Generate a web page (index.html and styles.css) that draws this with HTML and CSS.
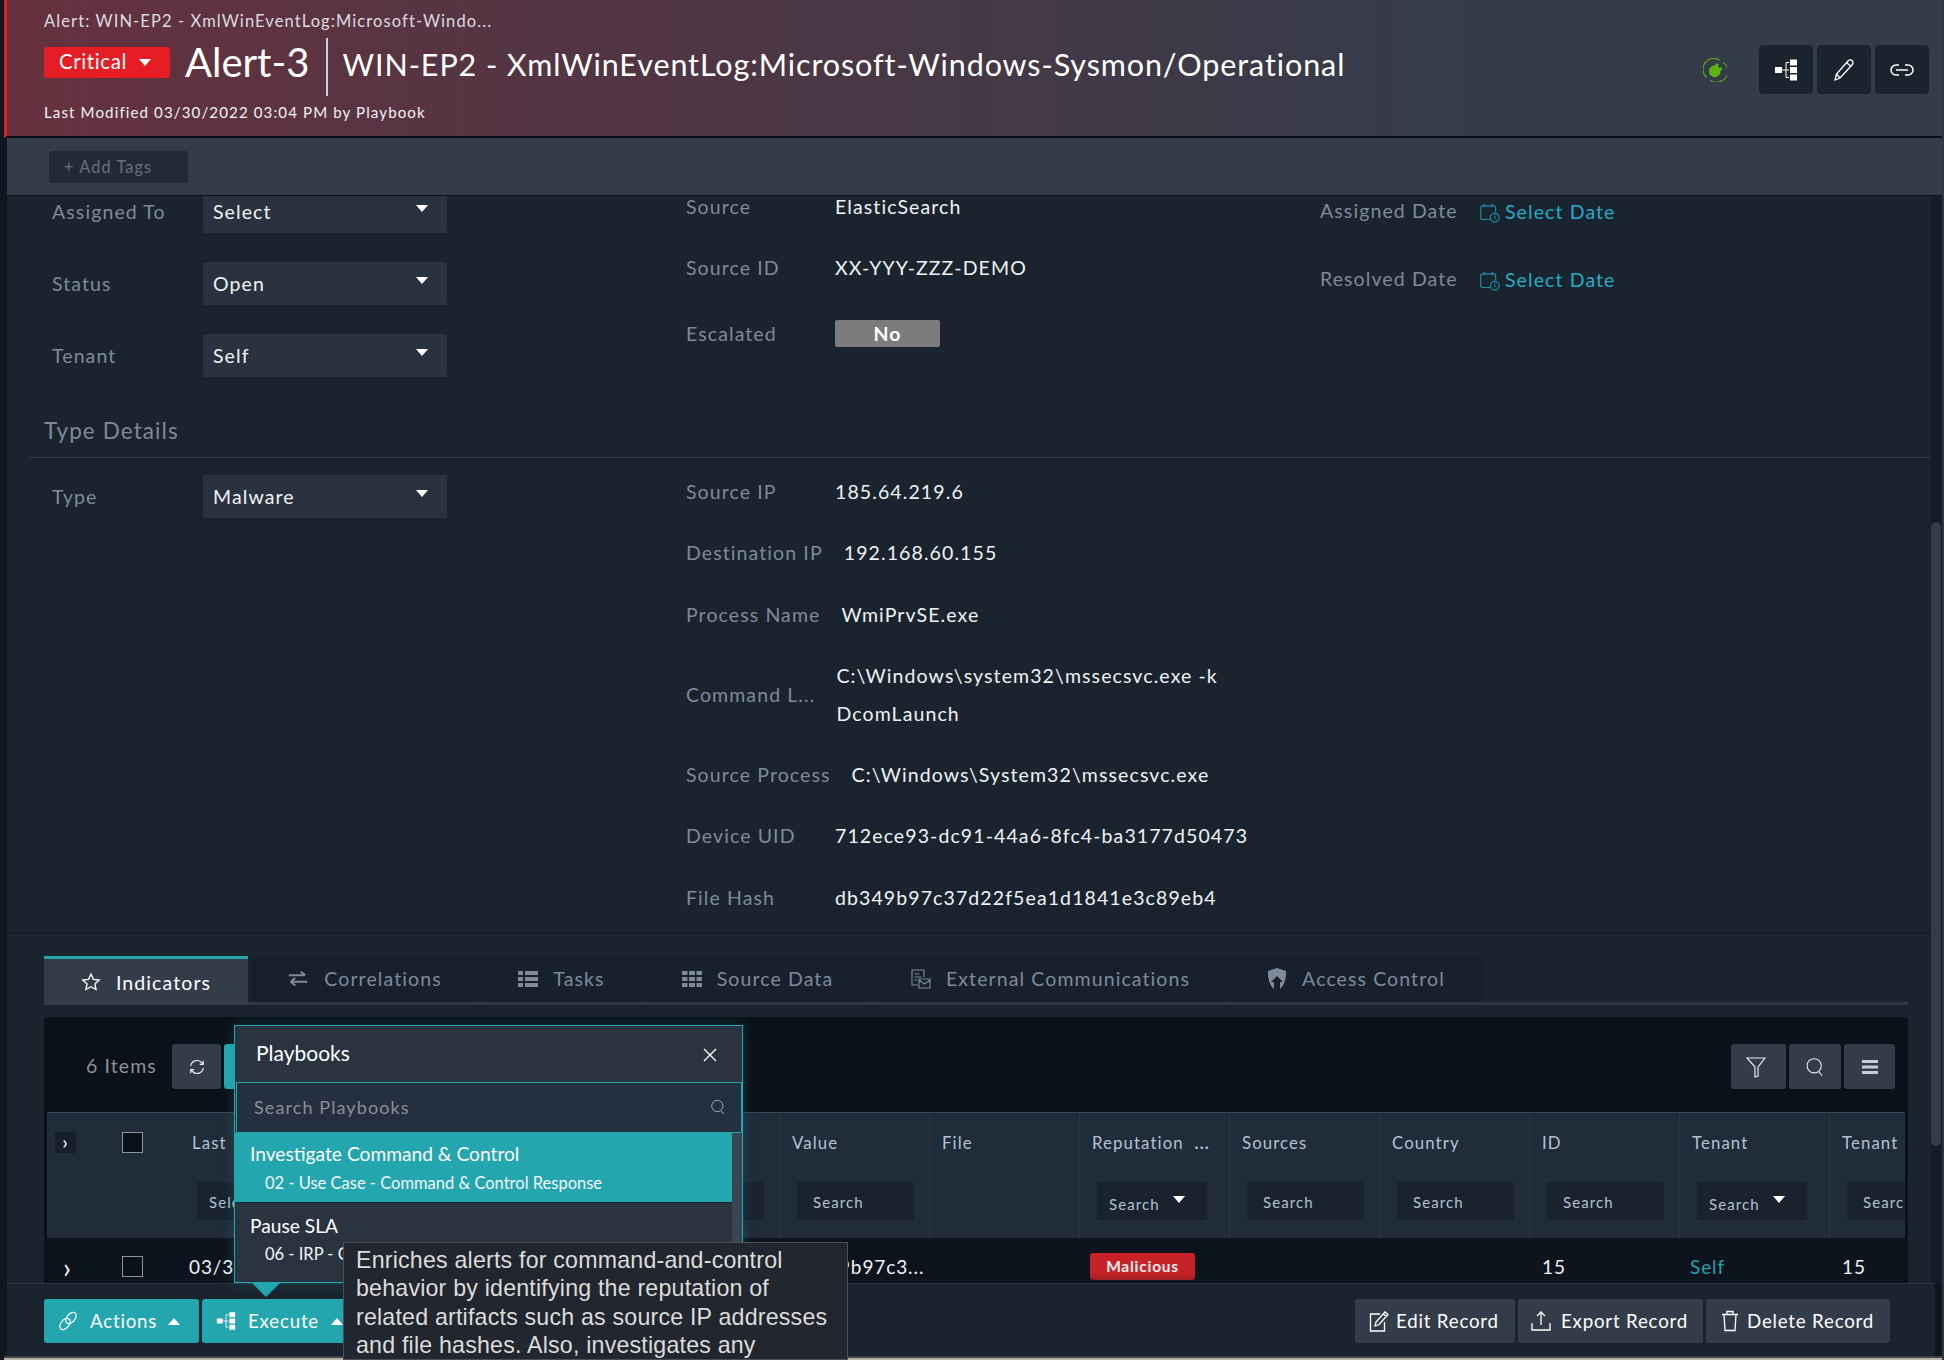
FILE: index.html
```html
<!DOCTYPE html>
<html lang="en">
<head>
  <meta charset="UTF-8">
  <title>Alert-3</title>
  <link rel="stylesheet" href="styles.css">
</head>
<body>
  <svg class="icon-defs" width="0" height="0">
    <symbol id="i-flow" viewBox="0 0 24 24">
      <path d="M8 12h4M12 4.500v15M12 4.500h3M12 12h3M12 19.500h3" fill="none" stroke="currentColor" stroke-width="1"/>
      <path d="M1 9h7v6H1zM16 1.500h7v6h-7zM16 9h7v6h-7zM16 16.500h7v6h-7z" fill="currentColor"/>
    </symbol>
    <symbol id="i-cal" viewBox="0 0 24 24">
      <path d="M13 20H4a2 2 0 0 1-2-2V6.500a2 2 0 0 1 2-2h13a2 2 0 0 1 2 2V12M6 2v4M15 2v4" fill="none" stroke="currentColor" stroke-width="1.300"/>
      <circle cx="18" cy="18" r="5" fill="none" stroke="currentColor" stroke-width="1.300"/>
      <path d="M18 15v3l2 2" fill="none" stroke="currentColor" stroke-width="1.100"/>
    </symbol>
    <symbol id="i-search" viewBox="0 0 24 24">
      <circle cx="11" cy="10.500" r="8.500" fill="none" stroke="currentColor" stroke-width="1.300"/>
      <path d="M16.500 17.500l4 5" fill="none" stroke="currentColor" stroke-width="1.300"/>
    </symbol>
  </svg>

  <div class="page">
    <!-- Record header -->
    <header class="record-head">
      <div class="head-left">
        <div class="crumb">Alert: WIN-EP2 - XmlWinEventLog:Microsoft-Windo...</div>
        <div class="head-title">
          <span class="severity">Critical<i class="caret"></i></span>
          <h1 class="alert-id">Alert-3</h1>
          <h2 class="alert-name">WIN-EP2 - XmlWinEventLog:Microsoft-Windows-Sysmon/Operational</h2>
        </div>
        <div class="modified">Last Modified 03/30/2022 03:04 PM by Playbook</div>
      </div>
      <div class="head-right">
        <svg class="plug" viewBox="0 0 24 24" width="24" height="24">
          <path d="M3.500 19.500A11 11 0 0 1 17 2.200M20.500 4.500A11 11 0 0 1 7 22" fill="none" stroke="#5aa50f" stroke-width="1.200"/>
          <path d="M6 13.500c0-3.500 2.500-6 5.500-6L14 5l2 2-1 1.500 1.500 1.500L18 9l1.500 2-2 2c0 3.500-2.500 6-5.500 6s-6-2-6-5.500z" fill="#5fb30e"/>
        </svg>
        <button class="head-btn"><svg width="24" height="24"><use href="#i-flow"/></svg></button>
        <button class="head-btn">
          <svg width="22" height="24" viewBox="0 0 22 24"><path d="M2 22l1.500-6L15 3c1.500-1.500 3.500-1.500 4.500 0s.5 3-1 4.500L7 20zM3.500 16L7 20M14 5l4 3.500" fill="none" stroke="currentColor" stroke-width="1.300"/></svg>
        </button>
        <button class="head-btn">
          <svg width="24" height="14" viewBox="0 0 24 14"><path d="M9 2H6a5 5 0 0 0 0 10h3M15 2h3a5 5 0 0 1 0 10h-3M6 7h12" fill="none" stroke="currentColor" stroke-width="1.500"/></svg>
        </button>
      </div>
    </header>

    <div class="tag-bar"><span class="add-tags">+ Add Tags</span></div>

    <div class="middle">
      <main class="record-body">
        <div class="record-inner">
          <section class="detail-grid">
            <div class="col-select">
              <div class="select-row"><span class="sel-label">Assigned To</span><span class="select">Select<i class="caret"></i></span></div>
              <div class="select-row"><span class="sel-label">Status</span><span class="select">Open<i class="caret"></i></span></div>
              <div class="select-row"><span class="sel-label">Tenant</span><span class="select">Self<i class="caret"></i></span></div>
            </div>
            <div class="col-fields">
              <div class="field"><span class="field-label">Source</span><span class="field-value">ElasticSearch</span></div>
              <div class="field"><span class="field-label">Source ID</span><span class="field-value">XX-YYY-ZZZ-DEMO</span></div>
              <div class="field field-esc"><span class="field-label">Escalated</span><span class="pill-no">No</span></div>
            </div>
            <div class="col-dates">
              <div class="date-row"><span class="date-label">Assigned Date</span><svg class="cal" width="21" height="21"><use href="#i-cal"/></svg><span class="date-link">Select Date</span></div>
              <div class="date-row"><span class="date-label">Resolved Date</span><svg class="cal" width="21" height="21"><use href="#i-cal"/></svg><span class="date-link">Select Date</span></div>
            </div>
          </section>

          <h3 class="section-title">Type Details</h3>

          <section class="detail-grid type-grid">
            <div class="col-select">
              <div class="select-row"><span class="sel-label">Type</span><span class="select">Malware<i class="caret"></i></span></div>
            </div>
            <div class="col-fields">
              <div class="field"><span class="field-label">Source IP</span><span class="field-value">185.64.219.6</span></div>
              <div class="field"><span class="field-label">Destination IP</span><span class="field-value">192.168.60.155</span></div>
              <div class="field"><span class="field-label">Process Name</span><span class="field-value">WmiPrvSE.exe</span></div>
              <div class="field"><span class="field-label">Command L...</span><span class="field-value wrap">C:\Windows\system32\mssecsvc.exe -k DcomLaunch</span></div>
              <div class="field"><span class="field-label">Source Process</span><span class="field-value">C:\Windows\System32\mssecsvc.exe</span></div>
              <div class="field"><span class="field-label">Device UID</span><span class="field-value">712ece93-dc91-44a6-8fc4-ba3177d50473</span></div>
              <div class="field"><span class="field-label">File Hash</span><span class="field-value">db349b97c37d22f5ea1d1841e3c89eb4</span></div>
            </div>
          </section>

          <!-- Tabs -->
          <nav class="tabs">
            <a class="tab tab-active" style="width:204px">
              <svg width="20" height="20" viewBox="0 0 24 24"><path d="M12 2.500l2.900 6.300 6.900.8-5.100 4.700 1.400 6.800-6.100-3.400-6.100 3.400 1.400-6.800-5.100-4.700 6.900-.8z" fill="none" stroke="currentColor" stroke-width="1.600"/></svg>Indicators</a>
            <a class="tab" style="width:229px">
              <svg width="22" height="20" viewBox="0 0 24 20"><path d="M2 6h17M15 2l5 4M22 13H5M9 9l-5 4M9 17l-5-4" fill="none" stroke="currentColor" stroke-width="2.200"/></svg>Correlations</a>
            <a class="tab" style="width:161px">
              <svg width="20" height="16" viewBox="0 0 20 16"><path d="M0 0h5v4H0zM7 0h13v4H7zM0 6h5v4H0zM7 6h13v4H7zM0 12h5v4H0zM7 12h13v4H7z" fill="currentColor"/></svg>Tasks</a>
            <a class="tab" style="width:227px">
              <svg width="20" height="16" viewBox="0 0 20 16"><path d="M0 0h5.500v4H0zM7 0h6v4H7zM14.500 0H20v4h-5.500zM0 6h5.500v4H0zM7 6h6v4H7zM14.500 6H20v4h-5.500zM0 12h5.500v4H0zM7 12h6v4H7zM14.500 12H20v4h-5.500z" fill="currentColor"/></svg>Source Data</a>
            <a class="tab" style="width:355px">
              <svg width="20" height="20" viewBox="0 0 20 20"><path d="M7 16H1V1h12v7M3.500 5h5M3.500 8h7M3.500 11h3M8 10h11v9H8zM8 11l5.500 4 5.500-4" fill="none" stroke="currentColor" stroke-width="1.100"/></svg>External Communications</a>
            <a class="tab" style="width:252px">
              <svg width="20" height="22" viewBox="0 0 20 22"><path d="M10 0l9 3c.5 8-2 15-6 18v-7h3l-6-6-6 6h3v7C3 18 .5 11 1 3z" fill="currentColor"/></svg>Access Control</a>
          </nav>

          <!-- Indicators grid -->
          <section class="grid-panel">
            <div class="grid-tools">
              <div class="tools-left">
                <span class="item-count">6 Items</span>
                <button class="tool-btn tool-refresh">
                  <svg width="18" height="18" viewBox="0 0 20 20"><path d="M3 9a7 7 0 0 1 12-4l2 2M17 11a7 7 0 0 1-12 4l-2-2M17 3v4h-4M3 17v-4h4" fill="none" stroke="currentColor" stroke-width="1.300"/></svg>
                </button>
                <button class="tool-btn tool-teal"></button>
              </div>
              <div class="tools-right">
                <button class="tool-btn tool-w55">
                  <svg width="20" height="22" viewBox="0 0 20 22"><path d="M1 2h18l-7 9v9l-3 1v-10z" fill="none" stroke="currentColor" stroke-width="1.200"/></svg>
                </button>
                <button class="tool-btn tool-w52"><svg width="20" height="22"><use href="#i-search"/></svg></button>
                <button class="tool-btn tool-w51">
                  <svg width="16" height="14" viewBox="0 0 16 14"><path d="M0 0h16v3H0zM0 5.500h16v3H0zM0 11h16v3H0z" fill="#c3ccd8"/></svg>
                </button>
              </div>
            </div>

            <div class="grid-scroll">
              <div class="grid-head">
                <div class="cell first-cell"><span class="expand-box">&rsaquo;</span><span class="check"></span></div>
                <div class="cell"><span class="col-name">Last</span><span class="filter filter-tight">Select</span></div>
                <div class="cell"></div>
                <div class="cell"></div>
                <div class="cell"><span class="col-name">&nbsp;</span><span class="filter">Search</span></div>
                <div class="cell"><span class="col-name">Value</span><span class="filter">Search</span></div>
                <div class="cell"><span class="col-name">File</span></div>
                <div class="cell"><span class="col-name">Reputation &nbsp;<b>...</b></span><span class="filter filter-select">Search<i class="caret"></i></span></div>
                <div class="cell"><span class="col-name">Sources</span><span class="filter">Search</span></div>
                <div class="cell"><span class="col-name">Country</span><span class="filter">Search</span></div>
                <div class="cell"><span class="col-name">ID</span><span class="filter">Search</span></div>
                <div class="cell"><span class="col-name">Tenant</span><span class="filter filter-select">Search<i class="caret"></i></span></div>
                <div class="cell"><span class="col-name">Tenant</span><span class="filter">Search</span></div>
              </div>
              <div class="grid-row">
                <div class="rcell first-cell"><span class="row-expand">&rsaquo;</span><span class="check"></span></div>
                <div class="rcell date-cell">03/30/2022</div>
                <div class="rcell"></div>
                <div class="rcell"></div>
                <div class="rcell"></div>
                <div class="rcell">db349b97c3...</div>
                <div class="rcell"></div>
                <div class="rcell"><span class="badge-bad">Malicious</span></div>
                <div class="rcell"></div>
                <div class="rcell"></div>
                <div class="rcell">15</div>
                <div class="rcell link-cell">Self</div>
                <div class="rcell">15</div>
              </div>
            </div>
          </section>
        </div>
      </main>
      <div class="scroll-track"><div class="scroll-thumb"></div></div>
    </div>

    <!-- Action bar -->
    <footer class="action-bar">
      <div class="action-group">
        <button class="btn-teal btn-actions">
          <svg width="22" height="22" viewBox="0 0 22 22"><g fill="none" stroke="currentColor" stroke-width="1.200"><ellipse cx="14" cy="8" rx="4" ry="6.500" transform="rotate(40 14 8)"/><ellipse cx="8" cy="14" rx="4" ry="6.500" transform="rotate(40 8 14)"/></g></svg>
          Actions<i class="caret caret-up"></i></button>
        <button class="btn-teal btn-execute">
          <svg width="20" height="20"><use href="#i-flow"/></svg>
          Execute<i class="caret caret-up"></i></button>
      </div>
      <div class="action-group">
        <button class="btn-dark btn-edit">
          <svg width="20" height="22" viewBox="0 0 20 22"><path d="M11 4H1.500v17h14v-9M6 16l1-4 9-10 3 2.500-9 10zM14.500 4l3 2.500" fill="none" stroke="currentColor" stroke-width="1.300"/></svg>
          Edit Record</button>
        <button class="btn-dark btn-export">
          <svg width="20" height="22" viewBox="0 0 20 22"><path d="M10 15V2M6 6l4-4 4 4M1 13v7h18v-7" fill="none" stroke="currentColor" stroke-width="1.300"/></svg>
          Export Record</button>
        <button class="btn-dark btn-delete">
          <svg width="18" height="22" viewBox="0 0 18 22"><path d="M1 4.500h16M6 4.500V1.500h6v3M3 4.500l1 16h10l1-16" fill="none" stroke="currentColor" stroke-width="1.300"/></svg>
          Delete Record</button>
      </div>
    </footer>
    <div class="cut-strip"></div>
  </div>

  <!-- Playbooks popup -->
  <div class="playbooks">
    <div class="pb-head">
      <span class="pb-title">Playbooks</span>
      <svg width="14" height="14" viewBox="0 0 14 14"><path d="M1 1l12 12M13 1L1 13" fill="none" stroke="#fff" stroke-width="1.400"/></svg>
    </div>
    <div class="pb-search">
      <span>Search Playbooks</span>
      <svg width="16" height="18"><use href="#i-search"/></svg>
    </div>
    <div class="pb-body">
      <div class="pb-list">
        <div class="pb-item pb-item-on">
          <div class="pb-name">Investigate Command &amp; Control</div>
          <div class="pb-sub">02 - Use Case - Command &amp; Control Response</div>
        </div>
        <div class="pb-item pb-item-off">
          <div class="pb-name">Pause SLA</div>
          <div class="pb-sub">06 - IRP - Contain</div>
        </div>
      </div>
      <div class="pb-scroll"></div>
    </div>
  </div>
  <div class="pb-arrow"></div>

  <div class="tip">Enriches alerts for command-and-control behavior by identifying the reputation of related artifacts such as source IP addresses and file hashes. Also, investigates any</div>
</body>
</html>
```

FILE: styles.css
```css
/* General */
* {
  box-sizing: border-box;
}

body {
  margin: 0;
  height: 1360px;
  overflow: hidden;
  background: #10161d;
  font-family: Lato, "Open Sans", sans-serif;
  font-size: 19.500px;
  letter-spacing: 1.100px;
  color: #f0f2f4;
  position: relative;
}

button {
  font-family: inherit;
  letter-spacing: inherit;
  border: none;
  padding: 0;
}

.icon-defs {
  position: absolute;
}

.page {
  height: 1360px;
  margin-left: 4px;
  border-right: 2px solid #2e3844;
  display: flex;
  flex-direction: column;
  background: #10161d;
}

.caret {
  display: inline-block;
  width: 0;
  height: 0;
  border-left: 6px solid transparent;
  border-right: 6px solid transparent;
  border-top: 7px solid #fff;
}

.caret-up {
  border-top: none;
  border-bottom: 7px solid #fff;
}

/* Header */
.record-head {
  height: 138px;
  flex: none;
  display: flex;
  justify-content: space-between;
  background: linear-gradient(90deg, #66313f 0, #343c4a 76%);
  border-left: 3px solid #d9202a;
  border-bottom: 2px solid #0c1016;
  padding-left: 37px;
}

.crumb {
  margin-top: 12px;
  height: 20px;
  line-height: 18px;
  font-size: 16.500px;
  color: #dcdce0;
}

.head-title {
  display: flex;
  align-items: flex-start;
  margin-top: 6px;
  height: 58px;
}

.severity {
  margin-top: 9px;
  width: 126px;
  height: 31px;
  background: #e71d25;
  border-radius: 3px;
  padding: 0 0 3px 15px;
  display: flex;
  align-items: center;
  font-size: 20.500px;
  letter-spacing: 0.6px;
  color: #fff;
}

.severity .caret {
  margin: 3px 0 0 12px;
}

.alert-id {
  margin: 0 0 0 15px;
  padding-right: 16px;
  height: 58px;
  border-right: 2px solid #c5d3e3;
  font-size: 40px;
  line-height: 48px;
  font-weight: 400;
  letter-spacing: 0;
  color: #fff;
}

.alert-name {
  margin: 0 0 0 15px;
  font-size: 30.500px;
  line-height: 52px;
  font-weight: 400;
  letter-spacing: 0.9px;
  color: #fff;
}

.modified {
  margin-top: 6px;
  line-height: 20px;
  font-size: 15.100px;
}

.head-right {
  display: flex;
  align-items: center;
  gap: 4px;
  padding: 3px 13px 0 0;
}

.plug {
  margin-right: 28px;
}

.head-btn {
  width: 54px;
  height: 49px;
  background: #1a242f;
  border-radius: 4px;
  color: #fff;
  display: flex;
  align-items: center;
  justify-content: center;
}

/* Tag bar */
.tag-bar {
  height: 58px;
  flex: none;
  margin-left: 3px;
  background: #333d4a;
  border-bottom: 1px solid #10161d;
  padding: 13px 0 0 42px;
}

.add-tags {
  display: block;
  width: 139px;
  height: 32px;
  line-height: 32px;
  padding-left: 15px;
  background: #222a36;
  border-radius: 3px;
  font-size: 16.300px;
  color: #66707c;
}

/* Body */
.middle {
  flex: 1;
  min-height: 0;
  display: flex;
  margin-left: 3px;
}

.record-body {
  flex: 1;
  min-width: 0;
  overflow: hidden;
  background: #1a242f;
}

.record-inner {
  margin-top: -8px;
  padding-left: 22px;
}

.scroll-track {
  width: 11px;
  flex: none;
  background: #141d27;
  padding-top: 326px;
}

.scroll-thumb {
  width: 10px;
  height: 624px;
  background: #333d4a;
  border-radius: 5px;
}

.detail-grid {
  display: grid;
  grid-template-columns: 634px 634px 1fr;
  padding-left: 23px;
}

.col-select {
  padding-top: 2px;
  display: flex;
  flex-direction: column;
  gap: 29px;
}

.select-row {
  display: flex;
  align-items: center;
}

.sel-label {
  width: 151px;
  color: #7e8a9a;
}

.select {
  width: 244px;
  height: 43px;
  background: #29333f;
  border-radius: 2px;
  padding: 0 19px 0 10px;
  display: flex;
  align-items: center;
  justify-content: space-between;
}

.select .caret {
  margin-top: -6px;
}

.col-fields {
  display: flex;
  flex-direction: column;
  gap: 23.300px;
}

.field {
  display: flex;
  gap: 21px;
  align-items: center;
  min-height: 38px;
}

.field-esc {
  margin-top: 4px;
}

.field-label {
  min-width: 128px;
  color: #7e8a9a;
  white-space: nowrap;
  margin-top: -1px;
}

.field-value {
  line-height: 38px;
  white-space: nowrap;
}

.wrap {
  white-space: normal;
  width: 420px;
}

.pill-no {
  width: 105px;
  height: 27px;
  line-height: 27px;
  text-align: center;
  background: #7c7c7c;
  border-radius: 2px;
  font-weight: 700;
  color: #fff;
}

.col-dates {
  padding-top: 3px;
  display: flex;
  flex-direction: column;
  gap: 30px;
}

.date-row {
  height: 38px;
  display: flex;
  align-items: center;
}

.date-label {
  width: 159px;
  color: #7e8a9a;
}

.cal {
  color: #1f8fa8;
  margin-top: 4px;
}

.date-link {
  margin: 3px 0 0 5px;
  color: #27abc6;
}

.section-title {
  margin: 39px 0 0;
  padding: 0 0 11px 15px;
  height: 42px;
  line-height: 30px;
  border-bottom: 1px solid #303b49;
  font-size: 22.500px;
  font-weight: 400;
  color: #7e8a9a;
}

.type-grid {
  padding-top: 15px;
  padding-bottom: 15px;
  border-bottom: 2px solid #141c25;
  margin: 0 -22px;
  padding-left: 45px;
}

/* Tabs */
.tabs {
  margin: 22px 23px 0 15px;
  height: 49px;
  display: flex;
  gap: 2px;
  border-bottom: 3px solid #2d3743;
}

.tab {
  height: 46px;
  background: #17212d;
  color: #7e8a9a;
  display: flex;
  align-items: center;
  justify-content: center;
  gap: 15px;
  font-size: 19.500px;
}

.tab-active {
  height: 49px;
  background: #333d4a;
  border-top: 3px solid #23a6ad;
  color: #fff;
  padding-top: 1px;
}

/* Grid panel */
.grid-panel {
  margin: 12px 23px 0 15px;
  background: #0b1119;
  border-radius: 4px 4px 0 0;
  height: 300px;
}

.grid-tools {
  height: 95px;
  padding: 27px 13px 0 42px;
  display: flex;
  justify-content: space-between;
}

.tools-left,
.tools-right {
  display: flex;
  align-items: flex-start;
  gap: 3px;
}

.item-count {
  width: 83px;
  line-height: 43px;
  color: #8d939b;
}

.tool-btn {
  height: 45px;
  background: #333d4a;
  border-radius: 3px;
  color: #e6eaef;
  display: flex;
  align-items: center;
  justify-content: center;
  padding-top: 2px;
}

.tool-refresh {
  width: 49px;
}

.tool-teal {
  width: 40px;
  background: #23a6ad;
}

.tool-w55 {
  width: 55px;
  padding-right: 6px;
}

.tool-w52 {
  width: 52px;
}

.tool-w51 {
  width: 51px;
}

.grid-scroll {
  margin: 0 3px;
  overflow: hidden;
}

.grid-head,
.grid-row {
  display: grid;
  grid-template-columns: 133px repeat(12, 150px);
  width: 1933px;
}

.grid-head {
  height: 126px;
  background: #202c39;
  border-top: 1px solid #39475a;
}

.cell {
  border-right: 1px solid #29353f;
  padding: 18px 12px 0;
  overflow: hidden;
}

.first-cell {
  padding: 19px 0 0 8px;
  border-right: none;
  display: flex;
  align-items: flex-start;
}

.expand-box {
  width: 21px;
  height: 21px;
  line-height: 19px;
  text-align: center;
  background: #16202a;
  color: #fff;
}

.check {
  width: 21px;
  height: 21px;
  margin-left: 46px;
  border: 1px solid #8e949b;
  background: #0b1119;
}

.col-name {
  display: block;
  height: 23px;
  line-height: 23px;
  font-size: 16.800px;
  color: #b5c1d1;
  white-space: nowrap;
}

.filter {
  display: block;
  width: 117px;
  height: 38px;
  line-height: 40px;
  margin: 28px 0 0 5px;
  padding-left: 16px;
  background: #18232d;
  border-radius: 2px;
  font-size: 15px;
  color: #b5c1d1;
  white-space: nowrap;
}

.filter-tight {
  padding-left: 12px;
}

.filter-select {
  width: 110px;
  padding-left: 12px;
  line-height: 45px;
  position: relative;
}

.filter-select .caret {
  position: absolute;
  right: 22px;
  top: 14px;
}

.grid-row {
  height: 58px;
  background: #0e141d;
  align-items: center;
}

.rcell {
  padding-left: 12px;
  white-space: nowrap;
  font-size: 19px;
  letter-spacing: 0.9px;
}

.rcell.first-cell {
  padding: 0 0 0 16px;
  align-items: center;
}

.row-expand {
  width: 13px;
  font-size: 28px;
  line-height: 20px;
}

.first-cell .row-expand + .check {
  margin-left: 46px;
}

.date-cell {
  padding-left: 9px;
}

.link-cell {
  padding-left: 10px;
  color: #1fa3aa;
}

.badge-bad {
  display: block;
  margin-left: -2px;
  width: 105px;
  height: 27px;
  line-height: 27px;
  text-align: center;
  background: linear-gradient(180deg, #c72227 75%, #9d2024);
  border-radius: 3px;
  font-size: 15.500px;
  letter-spacing: 0.75px;
  font-weight: 700;
  color: #eee;
}

/* Action bar */
.action-bar {
  height: 73px;
  flex: none;
  margin: 0 7px 0 3px;
  background: #1a242f;
  border-top: 1px solid #2c3642;
  padding: 15px 45px 0 37px;
  display: flex;
  justify-content: space-between;
  position: relative;
}

.action-group {
  display: flex;
  gap: 3px;
}

.btn-teal,
.btn-dark {
  height: 44px;
  border-radius: 3px;
  font-size: 18.700px;
  letter-spacing: 0.8px;
  color: #fff;
  display: flex;
  align-items: center;
  justify-content: flex-start;
  gap: 8px;
}

.btn-teal {
  background: #23a6ad;
  gap: 12px;
}

.btn-dark {
  background: #333d4a;
}

.btn-actions {
  width: 155px;
  padding-left: 13px;
  gap: 11px;
}

.btn-execute {
  width: 146px;
  padding-left: 14px;
}

.btn-edit {
  width: 160px;
  padding-left: 14px;
  gap: 7px;
}

.btn-export {
  width: 185px;
  padding-left: 13px;
  gap: 10px;
}

.btn-delete {
  width: 184px;
  padding-left: 15px;
}

.cut-strip {
  height: 4px;
  flex: none;
  background: #b8b4a8;
  border-top: 2px solid #3c434b;
}

/* Playbooks popup */
.playbooks {
  position: absolute;
  left: 234px;
  top: 1025px;
  width: 509px;
  height: 258px;
  background: #2a3441;
  border: 1px solid #23a6ad;
  box-shadow: 0 0 12px rgba(35, 166, 173, 0.25);
  display: flex;
  flex-direction: column;
  overflow: hidden;
}

.pb-head {
  height: 56px;
  flex: none;
  padding: 0 25px 4px 21px;
  display: flex;
  align-items: center;
  justify-content: space-between;
}

.pb-head svg {
  margin-top: 6px;
}

.pb-title {
  font-size: 21px;
  letter-spacing: 0;
  color: #fff;
}

.pb-search {
  height: 51px;
  flex: none;
  margin-left: 1px;
  background: #242f40;
  border: 1px solid #23a6ad;
  padding: 0 15px 2px 17px;
  display: flex;
  align-items: center;
  justify-content: space-between;
  color: #8b8f96;
  font-size: 18px;
}

.pb-search svg {
  color: #b4b8be;
}

.pb-body {
  flex: 1;
  display: flex;
  min-height: 0;
}

.pb-list {
  flex: 1;
}

.pb-scroll {
  width: 10px;
  background: #3a4552;
}

.pb-item {
  height: 70px;
  padding: 8px 0 0 15px;
  letter-spacing: 0;
}

.pb-item-on {
  background: #23a6ad;
  border-bottom: 1px solid #1a242f;
}

.pb-item-off {
  padding-top: 10px;
}

.pb-item-off .pb-sub {
  margin-top: 4px;
}

.pb-name {
  font-size: 19.200px;
  line-height: 26px;
  color: #fff;
}

.pb-sub {
  margin: 5px 0 0 15px;
  font-size: 16.500px;
  line-height: 22px;
  color: #f2f6f8;
}

.pb-arrow {
  position: absolute;
  left: 252px;
  top: 1283px;
  width: 0;
  height: 0;
  border-left: 14px solid transparent;
  border-right: 14px solid transparent;
  border-top: 14px solid #23a6ad;
}

.tip {
  position: absolute;
  left: 343px;
  top: 1242px;
  width: 505px;
  height: 118px;
  overflow: hidden;
  padding: 3px 12px 0;
  background: #22262e;
  border: 1px solid #4a4e55;
  font-family: "Liberation Sans", Arial, sans-serif;
  font-size: 23.200px;
  line-height: 28.300px;
  letter-spacing: 0.2px;
  color: #dcdcdc;
}
```
